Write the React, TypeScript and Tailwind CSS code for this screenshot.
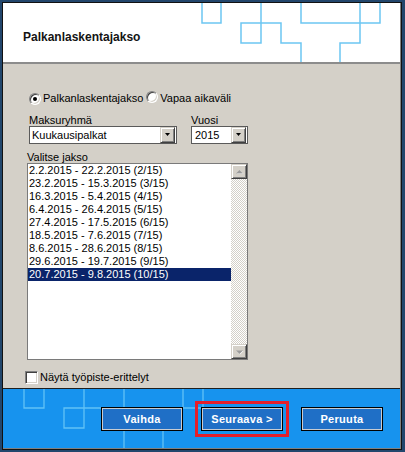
import React from "react";

const rows = [
  "2.2.2015 - 22.2.2015 (2/15)",
  "23.2.2015 - 15.3.2015 (3/15)",
  "16.3.2015 - 5.4.2015 (4/15)",
  "6.4.2015 - 26.4.2015 (5/15)",
  "27.4.2015 - 17.5.2015 (6/15)",
  "18.5.2015 - 7.6.2015 (7/15)",
  "8.6.2015 - 28.6.2015 (8/15)",
  "29.6.2015 - 19.7.2015 (9/15)",
  "20.7.2015 - 9.8.2015 (10/15)",
];

function Radio({ checked }: { checked?: boolean }) {
  return (
    <span className="relative inline-block w-[12px] h-[12px] shrink-0 rounded-full bg-white border border-t-[#808080] border-l-[#808080] border-r-[#ffffff] border-b-[#ffffff] shadow-[inset_1px_1px_0_#404040,inset_-1px_-1px_0_#d4d0c8]">
      {checked && (
        <span className="absolute left-[3px] top-[3px] w-[4px] h-[4px] rounded-full bg-black" />
      )}
    </span>
  );
}

function DropBtn() {
  return (
    <span className="flex items-center justify-center w-[15px] h-[16px] bg-[#d4d0c8] border border-t-[#d4d0c8] border-l-[#d4d0c8] border-r-[#404040] border-b-[#404040] shadow-[inset_1px_1px_0_#ffffff,inset_-1px_-1px_0_#808080]">
      <svg width="7" height="4" viewBox="0 0 7 4">
        <polygon points="1,0 6,0 3.5,3" fill="#000" />
      </svg>
    </span>
  );
}

function ScrollBtn({ up }: { up?: boolean }) {
  return (
    <span className="flex items-center justify-center w-[16px] h-[15px] bg-[#d4d0c8] border border-t-[#d4d0c8] border-l-[#d4d0c8] border-r-[#404040] border-b-[#404040] shadow-[inset_1px_1px_0_#ffffff,inset_-1px_-1px_0_#808080]">
      <svg width="9" height="6" viewBox="0 0 9 6">
        {up ? (
          <>
            <polygon points="1.5,5 8.5,5 5,1.5" fill="#ffffff" />
            <polygon points="1,4.5 8,4.5 4.5,1" fill="#9a9a9a" />
          </>
        ) : (
          <>
            <polygon points="1.5,2 8.5,2 5,5.5" fill="#ffffff" />
            <polygon points="1,1.5 8,1.5 4.5,5" fill="#9a9a9a" />
          </>
        )}
      </svg>
    </span>
  );
}

function Btn({ label }: { label: string }) {
  return (
    <button className="w-[82px] h-[24px] border border-black bg-[#1f6fc6] shadow-[inset_0_0_0_1px_#c8ccd2] text-white font-bold text-[11px] leading-[22px] tracking-[0.3px]">
      {label}
    </button>
  );
}

export default function App() {
  return (
    <div className="w-[405px] h-[452px] bg-[#22466c] overflow-hidden font-['Liberation_Sans',Arial,sans-serif] text-[11px] text-black">
      <div className="ml-[2px] mt-[2px] w-[400px] h-[448px] border border-[#111111]">
        <div className="flex flex-col h-full border-r border-b border-[#808080]">
          {/* Header */}
          <div className="relative h-[59px] bg-white flex items-center pl-[20px] pt-[9px]">
            <svg
              className="absolute left-0 top-0 pointer-events-none"
              width="397"
              height="59"
              viewBox="0 0 397 59"
              fill="none"
              stroke="#6cc6f2"
              strokeWidth="1.5"
            >
              <path d="M199,0 V20 H218 V0" />
              <path d="M258,0 V40 H238 V20 H278 V40 H298 V59" />
              <path d="M298,0 V20 H377 V0" />
              <path d="M357,0 V40 H337 V59" />
            </svg>
            <span className="relative font-bold text-[12px] text-[#141414]">Palkanlaskentajakso</span>
          </div>
          <div className="h-[2px] bg-[#8c8c8c]" />

          {/* Body */}
          <div className="h-[324px] bg-[#d4d0c8] flex flex-col pl-[22px]">
            <div className="mt-[28px] ml-[4px] h-[13px] flex items-center leading-[13px]">
              <Radio checked />
              <span className="ml-[2px]">Palkanlaskentajakso</span>
              <span className="ml-[3px]">
                <Radio />
              </span>
              <span className="ml-[2px]">Vapaa aikaväli</span>
            </div>

            <div className="mt-[9px] ml-[4px] flex gap-[14px]">
              <div className="flex flex-col w-[148px]">
                <span className="leading-[12px] h-[12px]">Maksuryhmä</span>
                <div className="h-[18px] flex items-center bg-white border border-[#5a5a5a] pl-[2px] pr-[1px]">
                  <span className="flex-1 leading-[16px]">Kuukausipalkat</span>
                  <DropBtn />
                </div>
              </div>
              <div className="flex flex-col w-[57px]">
                <span className="leading-[12px] h-[12px]">Vuosi</span>
                <div className="h-[18px] flex items-center bg-white border border-[#5a5a5a] pl-[3px] pr-[1px]">
                  <span className="flex-1 leading-[16px]">2015</span>
                  <DropBtn />
                </div>
              </div>
            </div>

            <span className="mt-[7px] ml-[2px] leading-[12px] h-[12px]">Valitse jakso</span>
            <div className="ml-[2px] w-[221px] h-[197px] flex bg-white border border-[#7a7a7a]">
              <div className="flex-1 flex flex-col">
                {rows.map((r, i) => (
                  <div
                    key={r}
                    className={
                      i === rows.length - 1
                        ? "h-[13px] leading-[13px] pl-[1px] bg-[#0a246a] text-white whitespace-nowrap"
                        : "h-[13px] leading-[13px] pl-[1px] whitespace-nowrap"
                    }
                  >
                    {r}
                  </div>
                ))}
              </div>
              <div className="w-[16px] flex flex-col justify-between bg-[repeating-conic-gradient(#d4d0c8_0%_25%,#ffffff_0%_50%)] bg-[length:2px_2px]">
                <ScrollBtn up />
                <ScrollBtn />
              </div>
            </div>

            <div className="mt-[11px] h-[13px] flex items-center leading-[13px]">
              <span className="w-[13px] h-[13px] shrink-0 bg-white border border-t-[#808080] border-l-[#808080] border-r-[#ffffff] border-b-[#ffffff] shadow-[inset_1px_1px_0_#404040,inset_-1px_-1px_0_#d4d0c8]" />
              <span className="ml-[2px]">Näytä työpiste-erittelyt</span>
            </div>
          </div>
          <div className="h-[1px] bg-[#1e1e1e]" />

          {/* Footer */}
          <div className="relative h-[59px] bg-[#1793ee] flex items-center pl-[98px] gap-[12px]">
            <svg
              className="absolute left-0 top-0 pointer-events-none"
              width="397"
              height="59"
              viewBox="0 0 397 59"
              fill="none"
              stroke="#62c2f6"
              strokeWidth="1.3"
            >
              <path d="M21,0 V19 H41 V0" />
              <path d="M81,0 V39 H61 V19 H200" />
              <path d="M121,0 V59" />
              <path d="M180,0 V19" />
              <path d="M200,0 V19" />
              <path d="M121,39 H160 V59" />
            </svg>
            <span className="relative">
              <Btn label="Vaihda" />
            </span>
            <span className="relative flex border-[3px] border-[#e41f2a] p-[3px]">
              <Btn label="Seuraava >" />
            </span>
            <span className="relative">
              <Btn label="Peruuta" />
            </span>
          </div>
        </div>
      </div>
    </div>
  );
}
